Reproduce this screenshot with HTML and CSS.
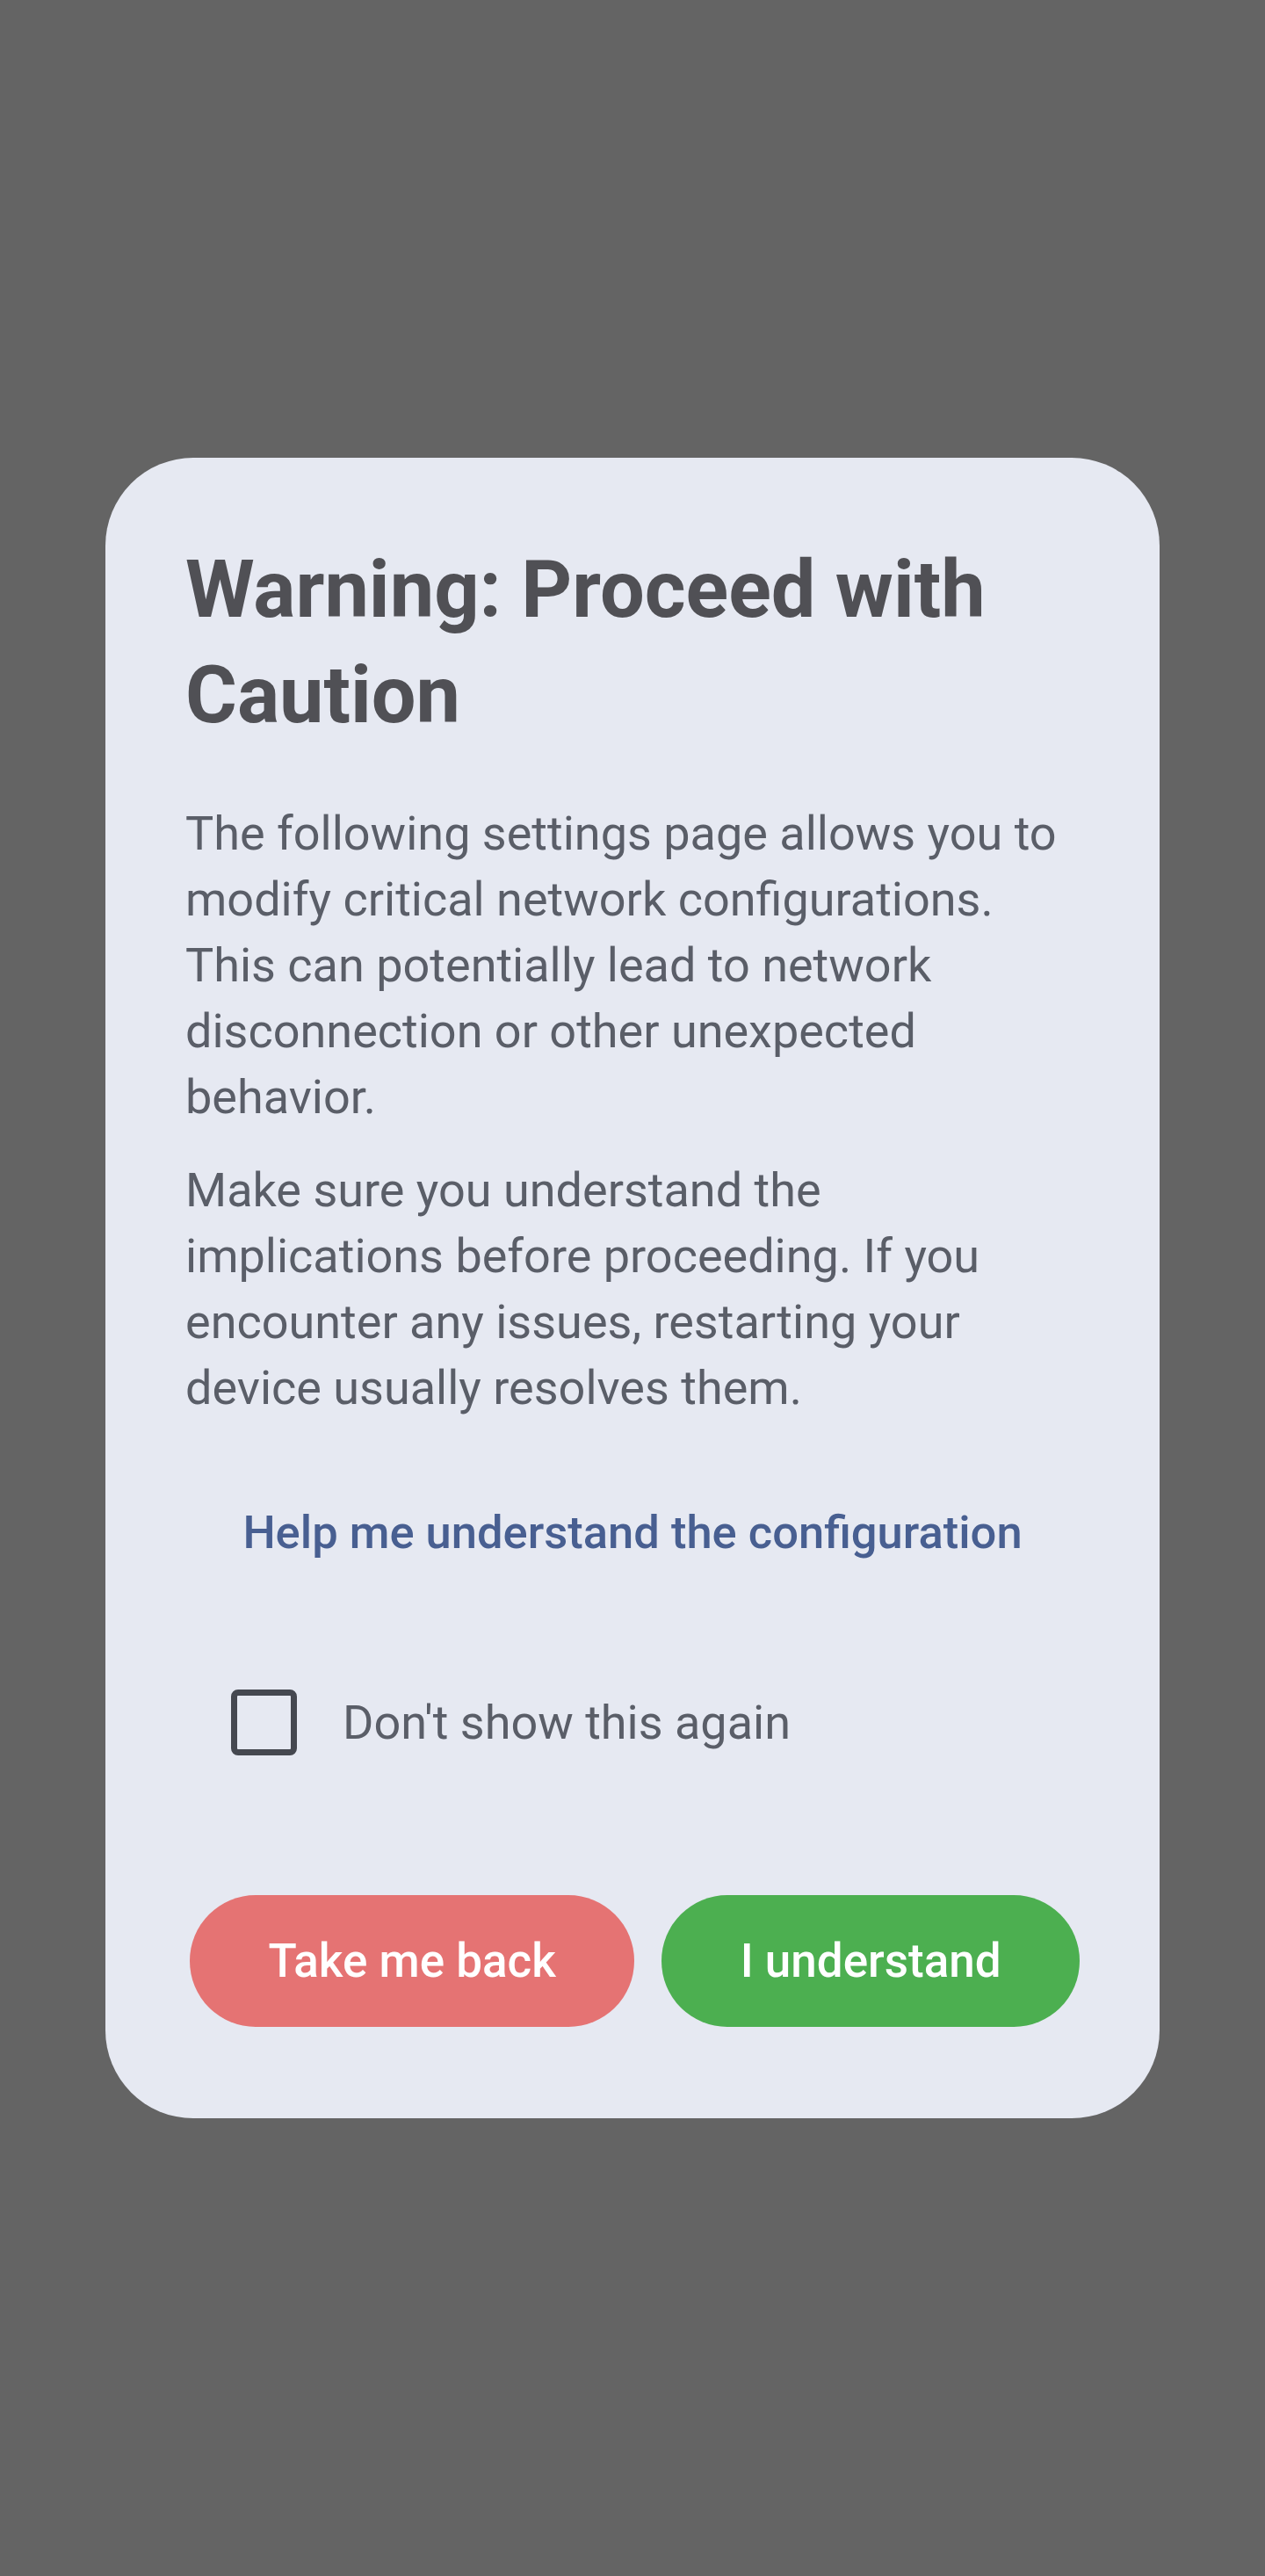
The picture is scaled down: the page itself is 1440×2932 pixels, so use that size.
FILE: index.html
```html
<!DOCTYPE html>
<html lang="en">
<head>
<meta charset="utf-8">
<title>Warning</title>
<link rel="stylesheet" href="styles.css">
</head>
<body>
<div class="screen">
  <div class="dialog">
    <h1 class="title">Warning: Proceed with Caution</h1>
    <div class="body">
      <p class="para">The following settings page allows you to modify critical network configurations. This can potentially lead to network disconnection or other unexpected behavior.</p>
      <p class="para">Make sure you understand the implications before proceeding. If you encounter any issues, restarting your device usually resolves them.</p>
    </div>
    <div class="link-row"><a class="help-link">Help me understand the configuration</a></div>
    <label class="check-row">
      <span class="checkbox"></span>
      <span class="check-label">Don't show this again</span>
    </label>
    <div class="actions">
      <button class="btn btn-back">Take me back</button>
      <button class="btn btn-ok">I understand</button>
    </div>
  </div>
</div>
</body>
</html>
```

FILE: styles.css
```css
html, body {
  margin: 0;
  padding: 0;
}
body {
  background: #646464;
  font-family: Roboto, "Noto Sans", sans-serif;
}
.screen {
  height: 2932px;
  display: flex;
  align-items: center;
  justify-content: center;
}
.dialog {
  width: 1200px;
  box-sizing: border-box;
  background: #e6e9f2;
  border-radius: 100px;
  padding: 91px 91px 104px 91px;
  display: flex;
  flex-direction: column;
}
.title {
  margin: 0;
  font-size: 90px;
  font-weight: 700;
  line-height: 120px;
  color: #505055;
}
.body {
  margin-top: 59px;
  display: flex;
  flex-direction: column;
  gap: 31px;
}
.para {
  margin: 0;
  font-size: 54px;
  line-height: 75px;
  color: #5a5e68;
}
.link-row {
  margin-top: 90px;
  display: flex;
  justify-content: center;
}
.help-link {
  font-size: 52.5px;
  font-weight: 500;
  line-height: 75px;
  color: #485f91;
  cursor: pointer;
}
.check-row {
  margin-top: 141px;
  margin-left: 52px;
  display: flex;
  align-items: center;
  gap: 52px;
}
.checkbox {
  width: 75px;
  height: 75px;
  box-sizing: border-box;
  border: 7px solid #454850;
  border-radius: 8px;
}
.check-label {
  font-size: 54px;
  line-height: 75px;
  color: #5a5e68;
}
.actions {
  margin-top: 159px;
  margin-left: 5px;
  display: flex;
  gap: 31px;
}
.btn {
  flex: 1 1 auto;
  height: 150px;
  border: none;
  border-radius: 75px;
  font-family: Roboto, "Noto Sans", sans-serif;
  font-size: 53px;
  font-weight: 500;
  color: #ffffff;
  padding: 0 40px;
}
.btn-back {
  background: #e57373;
}
.btn-ok {
  background: #4caf50;
}
```
